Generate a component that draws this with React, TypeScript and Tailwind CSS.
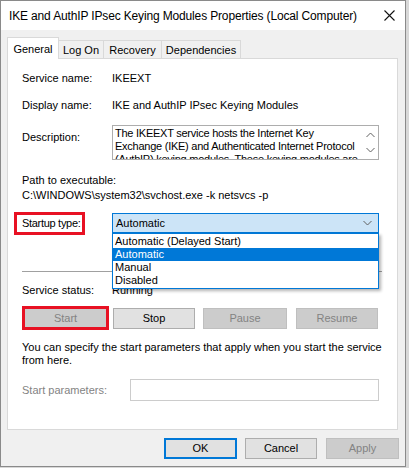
import React from "react";

const font = { fontFamily: '"Liberation Sans", Arial, sans-serif' };

function Btn({
  label,
  w,
  disabled,
  className = "",
}: {
  label: string;
  w: string;
  disabled?: boolean;
  className?: string;
}) {
  return (
    <div
      className={`${w} h-[21px] flex items-center justify-center border text-[11px] ${
        disabled
          ? "bg-[#cccccc] border-[#bfbfbf] text-[#838383]"
          : "bg-[#e1e1e1] border-[#adadad] text-black"
      } ${className}`}
    >
      {label}
    </div>
  );
}

function Chevron({ up }: { up?: boolean }) {
  return (
    <svg width="9" height="6" viewBox="0 0 9 6">
      <path
        d={up ? "M0.5 5 L4.5 1 L8.5 5" : "M0.5 1 L4.5 5 L8.5 1"}
        fill="none"
        stroke="#606060"
        strokeWidth="1"
      />
    </svg>
  );
}

export default function App() {
  const tabs = [
    { label: "Log On", w: "w-[45px]" },
    { label: "Recovery", w: "w-[58px]" },
    { label: "Dependencies", w: "w-[79px]" },
  ];

  return (
    <div className="w-[409px] h-[468px] bg-[#d8d8d8] overflow-hidden" style={font}>
      <div className="w-[406px] h-[467px] bg-[#f0f0f0] border border-[#8a8a8a] flex flex-col">
        {/* Title bar */}
        <div className="h-[29px] bg-white flex items-center justify-between pl-[8px] pr-[10px]">
          <span className="text-[12px] text-black tracking-[-0.15px]">
            IKE and AuthIP IPsec Keying Modules Properties (Local Computer)
          </span>
          <svg width="11" height="11" viewBox="0 0 11 11">
            <path d="M0.5 0.5 L10.5 10.5 M10.5 0.5 L0.5 10.5" stroke="#111" strokeWidth="1.1" />
          </svg>
        </div>

        <div className="px-[6px] pt-[7px]">
          {/* Tabs */}
          <div className="flex items-end h-[21px] text-[11px] relative z-10">
            <div className="w-[52px] h-[22px] bg-white border border-b-0 border-[#d9d9d9] flex items-center justify-center -mb-[1px] pt-[1px]">
              General
            </div>
            {tabs.map((t) => (
              <div
                key={t.label}
                className={`${t.w} h-[18px] border border-l-0 border-b-0 border-[#d9d9d9] flex items-center justify-center pt-[1px]`}
              >
                {t.label}
              </div>
            ))}
          </div>

          {/* Panel */}
          <div className="w-[391px] h-[372px] bg-white border border-[#d9d9d9] pl-[14px] text-[11px] leading-[13px] text-black">
            <div className="flex mt-[13px]">
              <span className="w-[90px]">Service name:</span>
              <span>IKEEXT</span>
            </div>
            <div className="flex mt-[14px]">
              <span className="w-[90px]">Display name:</span>
              <span>IKE and AuthIP IPsec Keying Modules</span>
            </div>
            <div className="flex mt-[13px]">
              <span className="w-[90px] pt-[6px]">Description:</span>
              <div className="w-[267px] h-[35px] border border-[#adadad] flex overflow-hidden">
                <div className="flex-1 pl-[2px] pt-[1px] leading-[13px] whitespace-nowrap overflow-hidden tracking-[-0.25px]">
                  <div>The IKEEXT service hosts the Internet Key</div>
                  <div>Exchange (IKE) and Authenticated Internet Protocol</div>
                  <div>(AuthIP) keying modules. These keying modules are</div>
                </div>
                <div className="w-[15px] flex flex-col items-center justify-between py-[6px]">
                  <Chevron up />
                  <Chevron />
                </div>
              </div>
            </div>
            <div className="mt-[14px]">Path to executable:</div>
            <div className="mt-[2px]">C:\WINDOWS\system32\svchost.exe -k netsvcs -p</div>

            {/* Startup type */}
            <div className="flex mt-[11px] h-[20px] items-center">
              <div className="w-[90px] relative">
                <span className="tracking-[-0.3px]">Startup type:</span>
                <div className="absolute left-[-8px] top-[-5px] w-[71px] h-[23px] border-[3px] border-[#e81123]" />
              </div>
              <div className="relative w-[267px] h-[20px] bg-[#cce4f7] border border-[#0078d7] flex items-center justify-between pl-[3px] pr-[6px]">
                <span>Automatic</span>
                <Chevron />
                {/* Open list */}
                <div className="absolute left-[-1px] top-[19px] w-[267px] bg-white border border-[#0078d7] py-[1px] shadow-[2px_2px_3px_rgba(0,0,0,0.3)] z-20">
                  <div className="h-[13px] pl-[2px] leading-[13px]">Automatic (Delayed Start)</div>
                  <div className="h-[13px] pl-[2px] leading-[13px] bg-[#0078d7] text-white">Automatic</div>
                  <div className="h-[13px] pl-[2px] leading-[13px]">Manual</div>
                  <div className="h-[13px] pl-[2px] leading-[13px]">Disabled</div>
                </div>
              </div>
            </div>

            <div className="mt-[38px] w-[360px] h-[1px] bg-[#a0a0a0]" />

            <div className="flex mt-[12px]">
              <span className="w-[90px]">Service status:</span>
              <span>Running</span>
            </div>

            {/* Service buttons */}
            <div className="flex mt-[11px] ml-[2px]">
              <div className="relative">
                <Btn label="Start" w="w-[83px]" disabled />
                <div className="absolute left-[-2px] right-[-2px] top-[-2px] bottom-[-1px] border-[3px] border-[#e81123]" />
              </div>
              <Btn label="Stop" w="w-[82px]" className="ml-[6px]" />
              <Btn label="Pause" w="w-[84px]" className="ml-[8px]" disabled />
              <Btn label="Resume" w="w-[82px]" className="ml-[9px]" disabled />
            </div>

            <div className="mt-[12px]">
              You can specify the start parameters that apply when you start the service
              <br />
              from here.
            </div>

            <div className="flex mt-[12px] items-center">
              <span className="w-[108px] text-[#838383]">Start parameters:</span>
              <div className="w-[249px] h-[22px] border border-[#cccccc] bg-white" />
            </div>
          </div>
        </div>

        {/* Dialog buttons */}
        <div className="flex justify-end pr-[6px] mt-[8px] gap-[8px]">
          <div className="w-[73px] h-[21px] border-2 border-[#0078d7] bg-[#e1e1e1] flex items-center justify-center text-[11px]">
            OK
          </div>
          <Btn label="Cancel" w="w-[72px]" />
          <Btn label="Apply" w="w-[73px]" className="ml-[1px]" disabled />
        </div>
      </div>
    </div>
  );
}
